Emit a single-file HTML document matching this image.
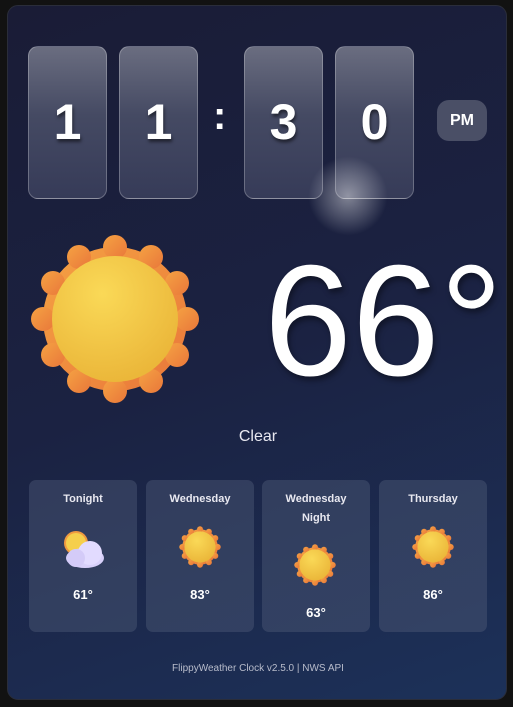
<!DOCTYPE html>
<html><head><meta charset="utf-8"><style>
*{margin:0;padding:0;box-sizing:border-box}
body{width:513px;height:707px;background:#121212;font-family:"Liberation Sans",sans-serif;position:relative;overflow:hidden}
.card{position:absolute;left:7px;top:5px;width:500px;height:695px;border-radius:11px;border:1px solid #2a2d3a;background:linear-gradient(160deg,#1a1c36 0%,#1b2242 50%,#1c3159 100%);overflow:hidden}
.d{position:absolute;top:40px;width:79px;height:153px;border-radius:10px;border:1.5px solid rgba(255,255,255,0.25);background:linear-gradient(180deg,#6a6d80 0%,#454a63 45%,#363b58 100%);color:#fff;font-family:"Liberation Sans",sans-serif;font-size:50px;font-weight:bold;text-align:center;line-height:150px;text-shadow:1px 3px 3px rgba(0,0,0,.5)}
.col{position:absolute;left:205px;top:88px;color:#fff;font-size:40px;font-weight:bold}
.pm{position:absolute;left:429px;top:94px;width:50px;height:41px;border-radius:12px;background:#4a4f66;color:#fff;font-weight:bold;font-size:16px;text-align:center;line-height:41px}
.glow{position:absolute;left:300px;top:150px;width:80px;height:80px;border-radius:50%;background:radial-gradient(circle,rgba(255,255,255,.45) 0%,rgba(255,255,255,.2) 40%,rgba(255,255,255,0) 70%)}
.temp{position:absolute;left:256px;top:224px;color:#fff;font-size:158px;line-height:182px;font-family:"Liberation Sans",sans-serif;text-shadow:2px 4px 6px rgba(0,0,0,.4);white-space:nowrap}
.cond{position:absolute;left:0;width:500px;top:422px;text-align:center;color:#e8e8f0;font-size:16px}
.f{position:absolute;top:474px;width:108px;height:152px;border-radius:7px;background:rgba(80,90,120,.45);color:#fff;text-align:center}
.f .n{font-size:11px;font-weight:bold;margin-top:10px;line-height:19px;color:#e8e8f0}
.f .t{position:absolute;left:0;width:100%;font-weight:bold;font-size:13px}
.f svg{position:absolute}
.foot{position:absolute;left:0;width:500px;top:657px;text-align:center;color:#b8bccb;font-size:10px}
</style></head><body>
<svg width="0" height="0" style="position:absolute"><defs>
<radialGradient id="g" cx="40%" cy="30%" r="70%"><stop offset="0" stop-color="#fad957"/><stop offset="1" stop-color="#ebb73a"/></radialGradient>
<linearGradient id="o" x1="0" y1="0" x2="1" y2="1"><stop offset="0" stop-color="#f5a243"/><stop offset="1" stop-color="#e9773a"/></linearGradient>
<g id="sun"><g fill="url(#o)"><circle r="72"/>
<circle cx="0" cy="-72" r="12"/><circle cx="36" cy="-62" r="12"/><circle cx="62" cy="-36" r="12"/><circle cx="72" cy="0" r="12"/><circle cx="62" cy="36" r="12"/><circle cx="36" cy="62" r="12"/><circle cx="0" cy="72" r="12"/><circle cx="-36" cy="62" r="12"/><circle cx="-62" cy="36" r="12"/><circle cx="-72" cy="0" r="12"/><circle cx="-62" cy="-36" r="12"/><circle cx="-36" cy="-62" r="12"/></g>
<circle r="63" fill="url(#g)"/></g>
</defs></svg>
<div class="card">
<div class="d" style="left:20px">1</div>
<div class="d" style="left:111px">1</div>
<div class="col">:</div>
<div class="d" style="left:236px">3</div>
<div class="d" style="left:327px">0</div>
<div class="glow"></div>
<div class="pm">PM</div>
<svg style="position:absolute;left:22px;top:228px" width="170" height="170" viewBox="-85 -85 170 170"><use href="#sun"/></svg>
<div class="temp">66°</div>
<div class="cond">Clear</div>

<div class="f" style="left:21px"><div class="n">Tonight</div>
<svg style="left:32px;top:48px" width="46" height="42" viewBox="0 0 46 42"><circle cx="15" cy="15" r="12" fill="#f09a40"/><circle cx="15" cy="15" r="10" fill="#f5cf4c"/><ellipse cx="24" cy="30" rx="19" ry="10" fill="#d8d0fa"/><circle cx="29" cy="25" r="12" fill="#e2dbff"/><circle cx="15" cy="30" r="9" fill="#d4cbf8"/></svg>
<div class="t" style="top:107px">61°</div></div>
<div class="f" style="left:138px"><div class="n">Wednesday</div>
<svg style="left:33px;top:46px" width="42" height="42" viewBox="-85 -85 170 170"><use href="#sun"/></svg>
<div class="t" style="top:107px">83°</div></div>
<div class="f" style="left:254px"><div class="n">Wednesday<br>Night</div>
<svg style="left:32px;top:64px" width="42" height="42" viewBox="-85 -85 170 170"><use href="#sun"/></svg>
<div class="t" style="top:125px">63°</div></div>
<div class="f" style="left:371px"><div class="n">Thursday</div>
<svg style="left:33px;top:46px" width="42" height="42" viewBox="-85 -85 170 170"><use href="#sun"/></svg>
<div class="t" style="top:107px">86°</div></div>
<div class="foot">FlippyWeather Clock v2.5.0 | NWS API</div>
</div>
</body></html>
